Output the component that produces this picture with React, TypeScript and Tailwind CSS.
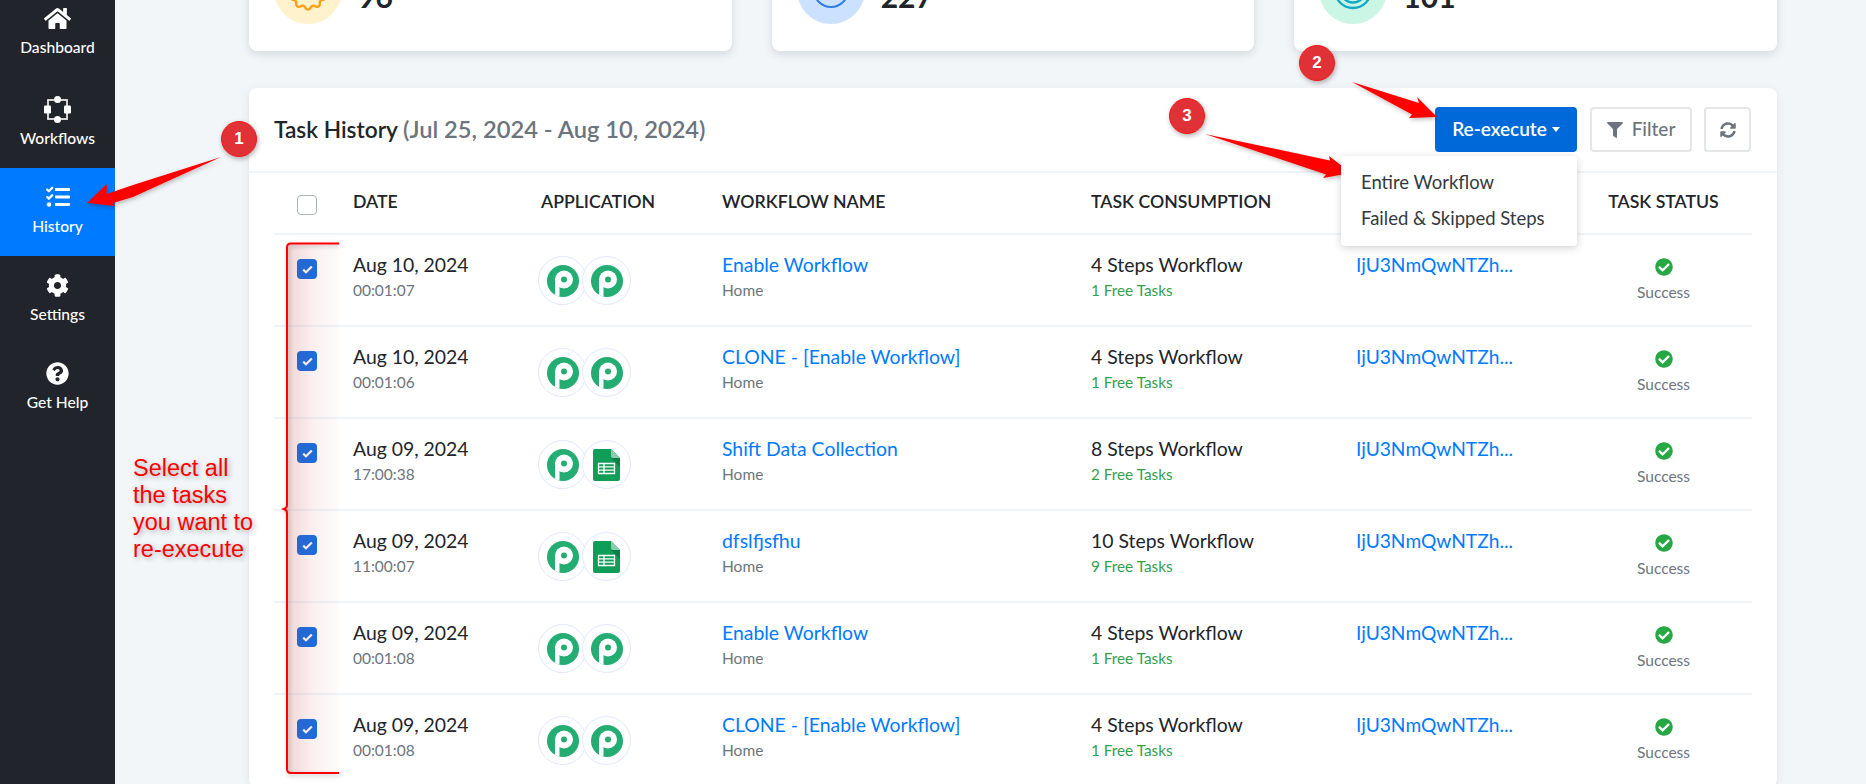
import React from "react";
import { FaHome, FaTasks, FaCog, FaQuestionCircle, FaFilter, FaSyncAlt, FaCheckCircle } from "react-icons/fa";

function wavy(cx: number, cy: number, r: number, amp: number, n: number) {
  const pts: string[] = [];
  for (let i = 0; i < 180; i++) {
    const t = (i / 180) * Math.PI * 2;
    const rr = r + amp * Math.cos(n * t);
    pts.push(`${(cx + rr * Math.sin(t)).toFixed(2)},${(cy + rr * Math.cos(t)).toFixed(2)}`);
  }
  return pts.join(" ");
}

function StatCard({ n, bg, icon }: { n: string; bg: string; icon: React.ReactNode }) {
  return (
    <div className="h-[120px] bg-white rounded-lg shadow-[0_3px_10px_rgba(40,60,80,0.16)] pl-[25px] pt-[25px] flex items-start">
      <div className={`w-[68px] h-[68px] rounded-full flex items-center justify-center shrink-0 ${bg}`}>{icon}</div>
      <div className="ml-[16px] mt-[20px] text-[30px] leading-[40px] font-bold text-[#212529]">{n}</div>
    </div>
  );
}

function PLogo({ v = 0 }: { v?: number }) {
  return (
    <svg width="32" height="32" viewBox="0 0 32 32">
      <circle cx="16" cy="16" r="16" fill="#23ad72" />
      <clipPath id={`pc${v}`}>
        <circle cx="16" cy="16" r="16" />
      </clipPath>
      <g clipPath={`url(#pc${v})`}>
        <circle cx="17" cy="14.5" r="9" fill="#fff" />
        <rect x="8" y="14.5" width="4.5" height="18" fill="#fff" />
        <circle cx="17" cy="14.5" r="3" fill="#23ad72" />
      </g>
    </svg>
  );
}

function Sheets() {
  return (
    <svg width="27" height="32" viewBox="0 0 27 32">
      <path d="M2 0H18L27 9V30a2 2 0 0 1-2 2H2a2 2 0 0 1-2-2V2a2 2 0 0 1 2-2Z" fill="#0f9d58" />
      <path d="M18 0L27 9H20a2 2 0 0 1-2-2Z" fill="#87ceac" />
      <path d="M18 9L27 18V9Z" fill="#0b7f46" />
      <path d="M5.5 14.5H21.5V24.5H5.5Z M5.5 17.8H21.5 M5.5 21.2H21.5 M11 14.5V24.5" fill="none" stroke="#fff" strokeWidth="1.3" />
    </svg>
  );
}

function Bubble({ children }: { children: React.ReactNode }) {
  return (
    <div className="w-[49px] h-[49px] rounded-full border border-[#dfe8fb] bg-white flex items-center justify-center shrink-0">
      {children}
    </div>
  );
}

function Check({ checked }: { checked: boolean }) {
  return checked ? (
    <div className="w-5 h-5 rounded-[4px] bg-[#0f6fe8] flex items-center justify-center">
      <svg width="11" height="9" viewBox="0 0 11 9">
        <path d="M1.2 4.6L4 7.3L9.8 1.4" fill="none" stroke="#fff" strokeWidth="2.2" />
      </svg>
    </div>
  ) : (
    <div className="w-5 h-5 rounded-[4px] bg-white border border-[#adb3b9]" />
  );
}

const rows = [
  { d: "Aug 10, 2024", t: "00:01:07", s: false, name: "Enable Workflow", steps: "4 Steps Workflow", free: "1 Free Tasks" },
  { d: "Aug 10, 2024", t: "00:01:06", s: false, name: "CLONE - [Enable Workflow]", steps: "4 Steps Workflow", free: "1 Free Tasks" },
  { d: "Aug 09, 2024", t: "17:00:38", s: true, name: "Shift Data Collection", steps: "8 Steps Workflow", free: "2 Free Tasks" },
  { d: "Aug 09, 2024", t: "11:00:07", s: true, name: "dfslfjsfhu", steps: "10 Steps Workflow", free: "9 Free Tasks" },
  { d: "Aug 09, 2024", t: "00:01:08", s: false, name: "Enable Workflow", steps: "4 Steps Workflow", free: "1 Free Tasks" },
  { d: "Aug 09, 2024", t: "00:01:08", s: false, name: "CLONE - [Enable Workflow]", steps: "4 Steps Workflow", free: "1 Free Tasks" },
];

function NavItem({ icon, label, active, first }: { icon: React.ReactNode; label: string; active?: boolean; first?: boolean }) {
  return (
    <div className={`flex flex-col items-center text-white ${first ? "h-[91px]" : "h-[88px]"} ${active ? "bg-[#007bff]" : ""}`}>
      <div className="h-[30px] mt-[14px] flex items-center justify-center">{icon}</div>
      <div className="mt-[4px] text-[15.6px] leading-[20px] font-medium">{label}</div>
    </div>
  );
}

function Annotations() {
  return (
    <>
      <svg className="absolute left-0 top-0 pointer-events-none" width="1866" height="784">
        <defs>
          <linearGradient id="fade" x1="0" x2="1" y1="0" y2="0">
            <stop offset="0" stopColor="#b02a2a" stopOpacity="0.2" />
            <stop offset="0.55" stopColor="#d04040" stopOpacity="0.07" />
            <stop offset="1" stopColor="#d04040" stopOpacity="0.02" />
          </linearGradient>
          <filter id="sh" x="-20%" y="-20%" width="140%" height="140%">
            <feDropShadow dx="1" dy="2" stdDeviation="2" floodColor="#000" floodOpacity="0.25" />
          </filter>
        </defs>
        <rect x="287" y="244" width="52" height="529" fill="url(#fade)" />
        <path d="M339 243.5H291Q287 243.5 287 247.5V505Q287 508 284 509Q287 510 287 513V769Q287 773 291 773H339" fill="none" stroke="#f00" strokeWidth="2" filter="url(#sh)" />
        <polygon points="221,157 133,185 106.7,194 106.7,184 87,203 115,206 113,203 133,197" fill="#f00" filter="url(#sh)" />
        <polygon points="1352,82 1419,103 1417,97 1437,117 1409,118 1412,114.5" fill="#f00" filter="url(#sh)" />
        <polygon points="1205,134 1330,160.5 1329,156 1351,173 1323,178 1326,174.5" fill="#f00" filter="url(#sh)" />
      </svg>
      {[
        { n: "1", c: "left-[221px] top-[121px]" },
        { n: "2", c: "left-[1299px] top-[45px]" },
        { n: "3", c: "left-[1169px] top-[98px]" },
      ].map((b) => (
        <div
          key={b.n}
          className={`absolute ${b.c} w-9 h-9 rounded-full bg-[#e03136] border border-[#ff1414] shadow-[1px_2px_5px_rgba(0,0,0,0.3)] flex items-center justify-center text-white font-bold text-[17px] [font-family:'Liberation_Sans',sans-serif]`}
        >
          {b.n}
        </div>
      ))}
      <div className="absolute left-[133px] top-[455px] text-[23.5px] leading-[27px] text-[#f00] [font-family:'Liberation_Sans',sans-serif] [text-shadow:2px_2px_5px_rgba(0,0,0,0.3)]">
        Select all
        <br />
        the tasks
        <br />
        you want to
        <br />
        re-execute
      </div>
    </>
  );
}

export default function App() {
  return (
    <div className="relative flex h-[784px] w-[1866px] overflow-hidden bg-[#f3f6f9] text-[#212529] [font-family:Lato,sans-serif]">
      <aside className="w-[115px] shrink-0 bg-[#21252b] -mt-[11px]">
        <NavItem first icon={<FaHome size={27} />} label="Dashboard" />
        <NavItem
          icon={
            <svg width="27" height="27" viewBox="0 0 27 27">
              <rect x="4" y="4" width="19" height="19" fill="none" stroke="#e6e6e6" strokeWidth="1.8" />
              <circle cx="13.5" cy="3.5" r="3.5" fill="#fff" />
              <circle cx="13.5" cy="23.5" r="3.5" fill="#fff" />
              <rect x="0" y="9.5" width="7" height="8" rx="1" fill="#fff" />
              <rect x="20" y="9.5" width="7" height="8" rx="1" fill="#fff" />
            </svg>
          }
          label="Workflows"
        />
        <NavItem active icon={<FaTasks size={24} />} label="History" />
        <NavItem icon={<FaCog size={23} />} label="Settings" />
        <NavItem icon={<FaQuestionCircle size={23} />} label="Get Help" />
      </aside>

      <main className="flex-1 pl-[134px] pr-[89px] -mt-[69px]">
        <div className="grid grid-cols-3 gap-10">
          <StatCard
            n="96"
            bg="bg-[#fff2cc]"
            icon={
              <svg width="44" height="44" viewBox="0 0 44 44">
                <polygon points={wavy(22, 22, 18, 1.6, 11)} fill="none" stroke="#f9a11b" strokeWidth="2.4" />
              </svg>
            }
          />
          <StatCard
            n="227"
            bg="bg-[#cce0ff]"
            icon={
              <svg width="44" height="44" viewBox="0 0 44 44">
                <circle cx="22" cy="22" r="17" fill="none" stroke="#2f7de1" strokeWidth="2" />
              </svg>
            }
          />
          <StatCard
            n="101"
            bg="bg-[#cbf5e5]"
            icon={
              <svg width="44" height="44" viewBox="0 0 44 44">
                <circle cx="22" cy="22" r="18" fill="none" stroke="#10aac8" strokeWidth="2.4" />
                <circle cx="22" cy="22" r="12.5" fill="none" stroke="#10aac8" strokeWidth="2.4" />
              </svg>
            }
          />
        </div>

        <section className="mt-[37px] bg-white rounded-lg shadow-[0_2px_10px_rgba(40,60,80,0.1)]">
          <header className="relative h-[85px] border-b-2 border-[#edf4fb] pl-[25px] pr-[26px] flex items-center justify-between">
            <h1 className="text-[22.7px] leading-[28px] font-semibold text-[#212529] whitespace-nowrap">
              Task History <span className="text-[23.7px] text-[#6c757d]">(Jul 25, 2024 - Aug 10, 2024)</span>
            </h1>
            <div className="flex items-center">
              <div className="relative mr-[13px]">
                <button className="w-[142px] h-[45px] rounded bg-[#0069d9] text-white text-[19px] font-semibold flex items-center justify-center gap-[5px]">
                  Re-execute
                  <span className="w-0 h-0 border-x-[4px] border-x-transparent border-t-[5px] border-t-white" />
                </button>
                <div className="absolute right-0 top-[49px] z-10 w-[236px] h-[90px] bg-white rounded shadow-[0_2px_8px_rgba(0,0,0,0.18)] pl-5 pt-[8px] text-[18.5px] leading-[36px] text-[#343a40] whitespace-nowrap">
                  <div>Entire Workflow</div>
                  <div>Failed &amp; Skipped Steps</div>
                </div>
              </div>
              <button className="mr-[12px] w-[102px] h-[45px] rounded border-2 border-[#e4e6e8] text-[#6c757d] text-[19px] font-medium flex items-center justify-center gap-[9px]">
                <FaFilter size={16} />
                Filter
              </button>
              <button className="w-[47px] h-[45px] rounded border-2 border-[#e4e6e8] text-[#6c757d] flex items-center justify-center">
                <FaSyncAlt size={16} />
              </button>
            </div>
          </header>

          <div className="mx-[25px]">
            <div className="h-[62px] pb-[2px] flex items-center border-b-2 border-[#edf4fb] text-[17.7px] font-semibold text-[#212529] whitespace-nowrap">
              <div className="w-[79px] pl-[23px] pt-[6px]">
                <Check checked={false} />
              </div>
              <div className="w-[188px]">DATE</div>
              <div className="w-[181px]">APPLICATION</div>
              <div className="w-[369px]">WORKFLOW NAME</div>
              <div className="w-[484px]">TASK CONSUMPTION</div>
              <div className="w-[177px] text-center">TASK STATUS</div>
            </div>
            {rows.map((r, i) => (
              <div key={i} className="h-[92px] flex items-start border-b-2 border-[#edf4fb] whitespace-nowrap">
                <div className="w-[79px] pl-[23px] pt-[24px]">
                  <Check checked />
                </div>
                <div className="w-[188px] pt-[18px]">
                  <div className="text-[19.4px] leading-[24px]">{r.d}</div>
                  <div className="mt-[3px] text-[15.5px] leading-[20px] text-[#6c757d]">{r.t}</div>
                </div>
                <div className="w-[181px] pt-[21px] -ml-[3px] mr-[3px] flex">
                  <Bubble>
                    <PLogo />
                  </Bubble>
                  <div className="-ml-[5px]">
                    <Bubble>{r.s ? <Sheets /> : <PLogo v={1} />}</Bubble>
                  </div>
                </div>
                <div className="w-[369px] pt-[18px]">
                  <div className="text-[19.4px] leading-[24px] text-[#007bff]">{r.name}</div>
                  <div className="mt-[3px] text-[15.5px] leading-[20px] text-[#6c757d]">Home</div>
                </div>
                <div className="w-[265px] pt-[18px]">
                  <div className="text-[19.4px] leading-[24px]">{r.steps}</div>
                  <div className="mt-[3px] text-[15.3px] leading-[20px] text-[#34a04a]">{r.free}</div>
                </div>
                <div className="w-[219px] pt-[18px] text-[19.2px] leading-[24px] text-[#007bff]">IjU3NmQwNTZh...</div>
                <div className="w-[177px] pt-[23px] flex flex-col items-center">
                  <FaCheckCircle size={18} className="text-[#28a745]" />
                  <div className="mt-[6px] text-[15.5px] leading-[20px] text-[#6c757d]">Success</div>
                </div>
              </div>
            ))}
          </div>
        </section>
      </main>
      <Annotations />
    </div>
  );
}
